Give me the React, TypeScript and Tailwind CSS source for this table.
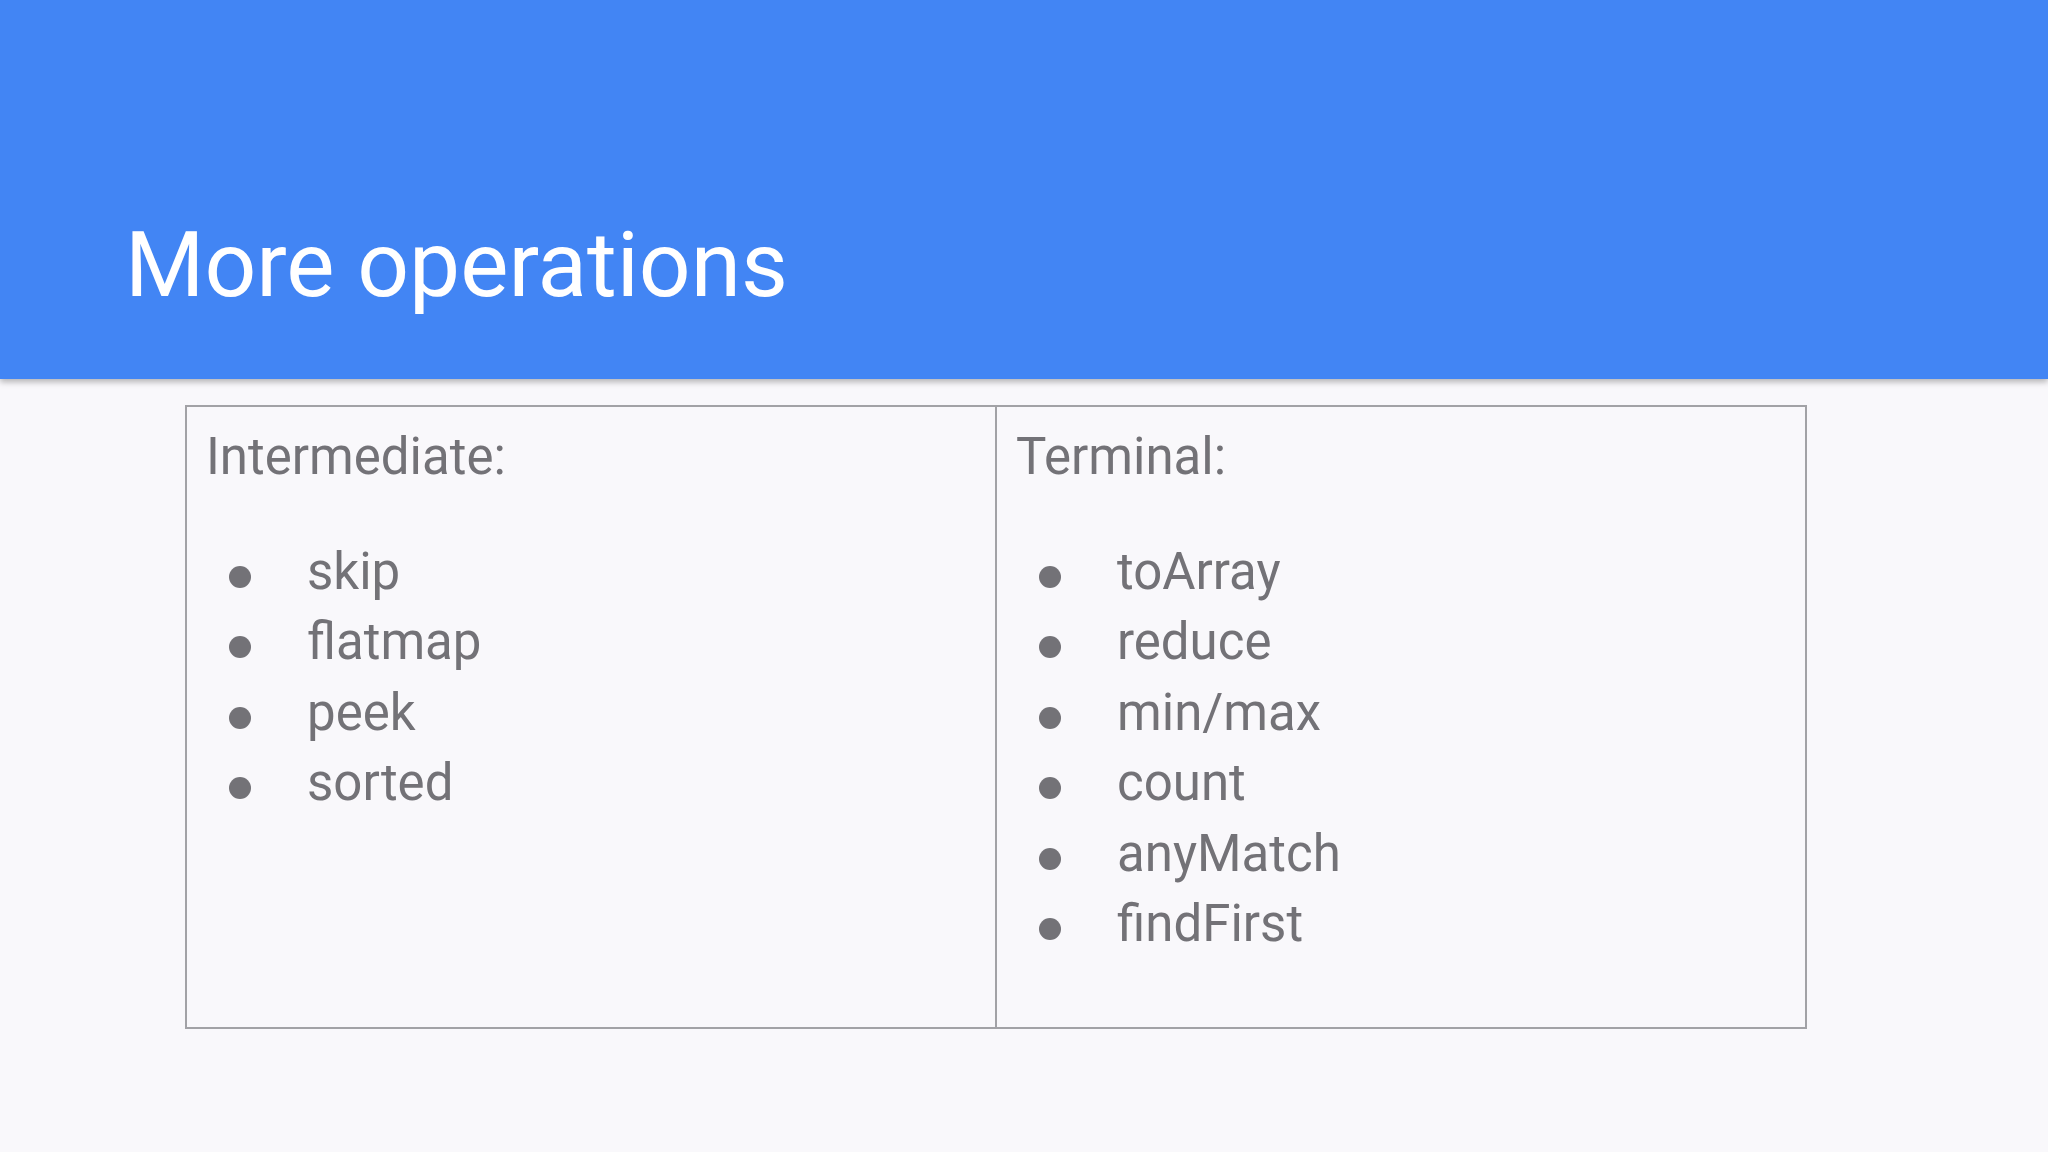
import React from 'react'

const intermediate = ['skip', 'flatmap', 'peek', 'sorted']
const terminal = ['toArray', 'reduce', 'min/max', 'count', 'anyMatch', 'findFirst']

const Column: React.FC<{ title: string; items: string[]; last?: boolean }> = ({ title, items, last }) => {
    return (
        <div className={`flex-1 pl-[19px] pt-[15px] ${last ? '' : 'border-r-2 border-[#a2a2a6]'}`}>
            <div className='text-[51px] leading-[70.5px]'>{title}</div>
            <ul className='mt-[44px] pl-[23px]'>
                {items.map((item) => (
                    <li key={item} className='flex items-start text-[51px] leading-[70.5px]'>
                        <span className='mt-[29px] w-[22px] h-[22px] rounded-full bg-[#737277] shrink-0' />
                        <span className='ml-[56px]'>{item}</span>
                    </li>
                ))}
            </ul>
        </div>
    )
}

const App: React.FC = () => {
    return (
        <div className='w-[2048px] h-[1152px] bg-[#f9f8fb] overflow-hidden' style={{ fontFamily: 'Roboto, "Noto Sans", sans-serif' }}>
            <div className='relative h-[379px] bg-[#4285f4] shadow-[0_3px_6px_rgba(0,0,0,0.28)] pl-[125px] pt-[220px]'>
                <h1 className='text-white text-[91px] leading-[91px]'>More operations</h1>
            </div>

            <div className='ml-[185px] mt-[26px] w-[1622px] h-[624px] border-2 border-[#a2a2a6] flex text-[#737277]'>
                <Column title='Intermediate:' items={intermediate} />
                <Column title='Terminal:' items={terminal} last />
            </div>
        </div>
    )
}

export default App
